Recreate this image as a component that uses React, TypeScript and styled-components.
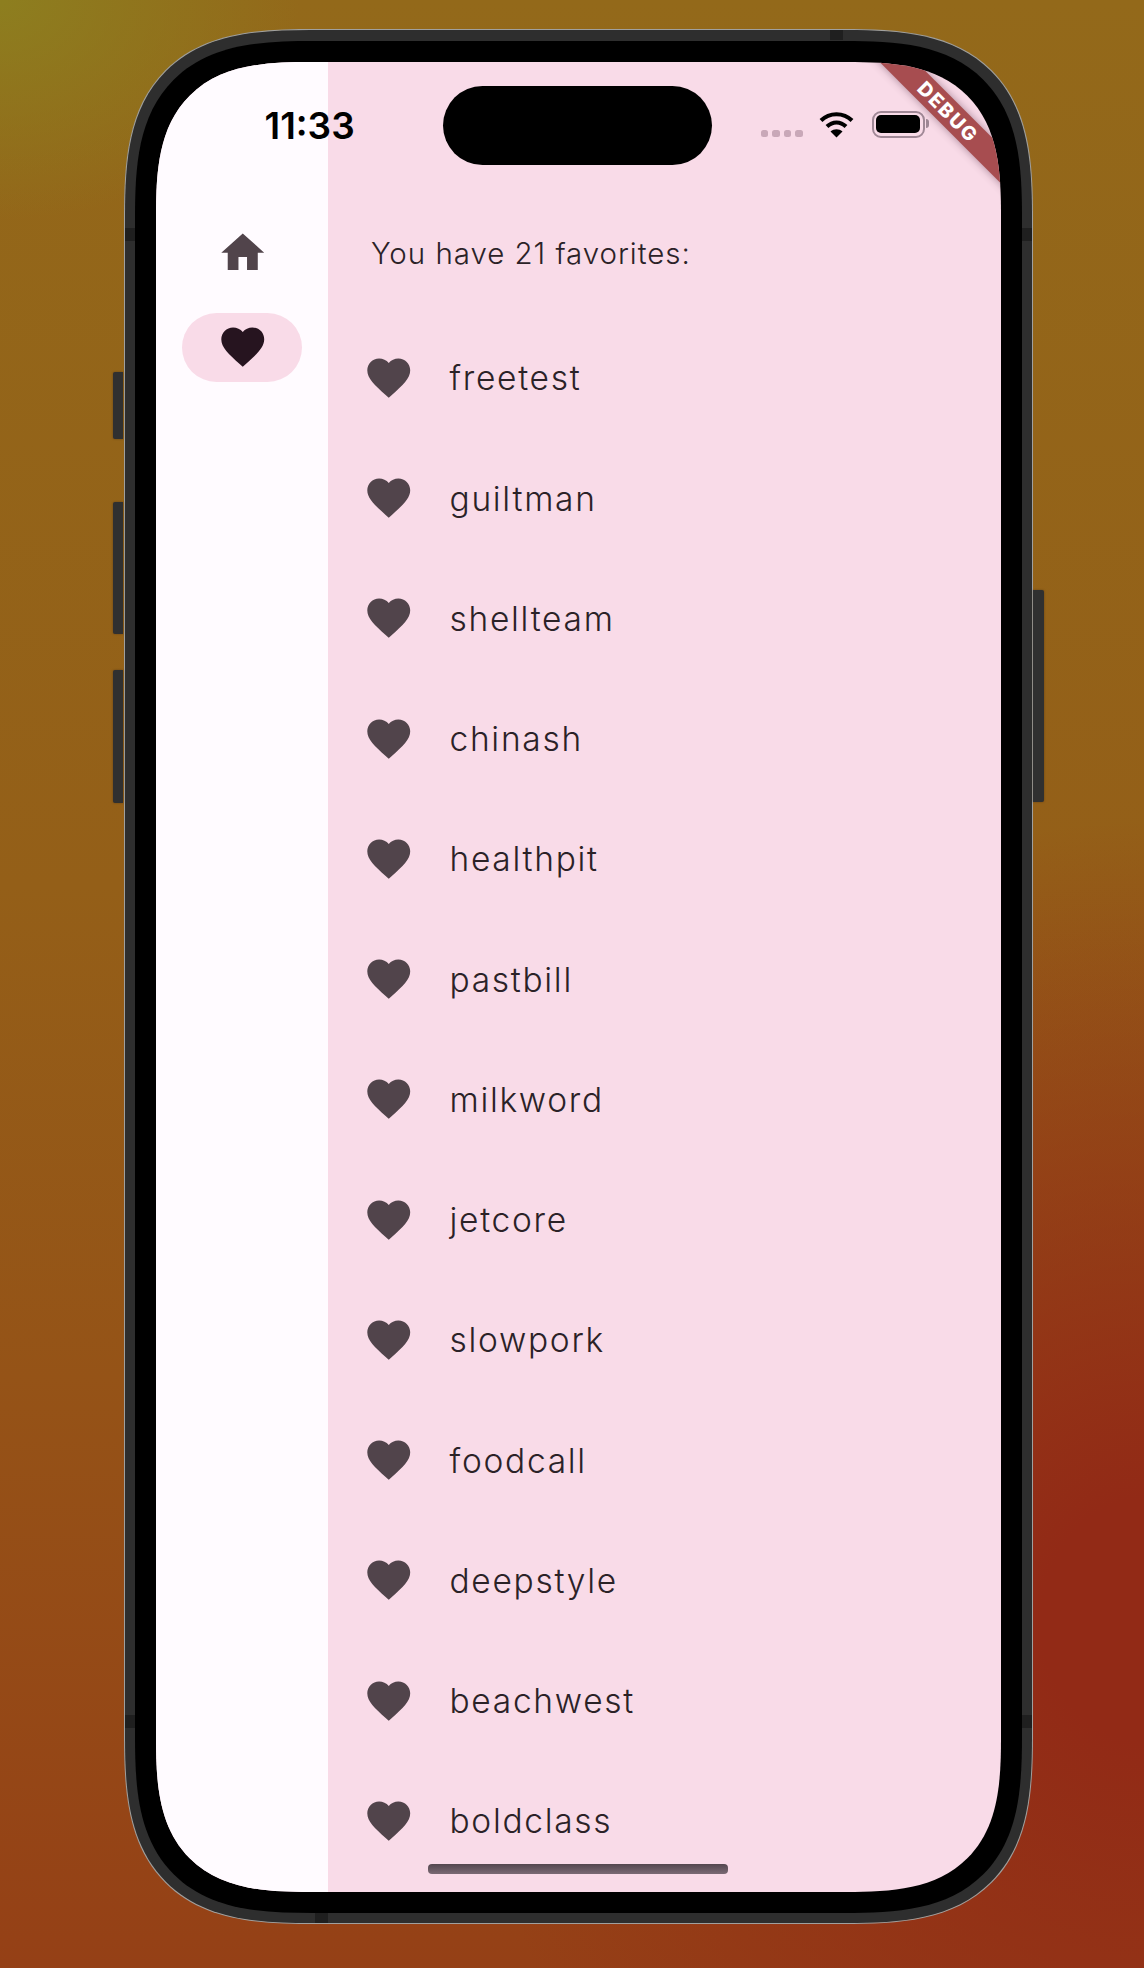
import React from 'react';
import styled, { createGlobalStyle } from 'styled-components';

const GlobalStyle = createGlobalStyle`
    html, body {
        margin: 0;
        padding: 0;
    }
    body {
        font-family: Inter, "Liberation Sans", sans-serif;
    }
`;

const Page = styled.div`
    width: 1144px;
    height: 1968px;
    overflow: hidden;
    box-sizing: border-box;
    padding: 28.5px 0 0 123.5px;
    background:
        radial-gradient(ellipse 300px 220px at 0 0, rgba(140, 130, 32, 0.85), rgba(140, 130, 32, 0) 100%),
        radial-gradient(ellipse 680px 800px at 1144px 1620px, rgba(146, 42, 22, 1) 15%, rgba(146, 42, 22, 0) 100%),
        linear-gradient(180deg, #93691a 0%, #945f18 45%, #955317 70%, #954016 100%);
`;

const Phone = styled.div`
    position: relative;
    width: 909px;
    height: 1895px;
    box-sizing: border-box;
    padding: 11px 10px 10px;
    border-radius: 190px;
    corner-shape: superellipse(1.5);
    background: #2e2e2e;
    border: 1.5px solid #a0a09e;
`;

const SideButton = styled.div<{ $top: number; $height: number; $right?: boolean }>`
    position: absolute;
    top: ${p => p.$top}px;
    height: ${p => p.$height}px;
    width: 10.5px;
    ${p => (p.$right ? 'right: -12px;' : 'left: -12px;')}
    background: #303030;
    border-radius: ${p => (p.$right ? '0 2px 2px 0' : '2px 0 0 2px')};
    box-shadow: 0 0 2px rgba(60, 40, 20, 0.6);
`;

const AntennaBand = styled.div<{ $side: 'top' | 'bottom' | 'left' | 'right'; $at: number }>`
    position: absolute;
    background: #1f1f1f;
    ${p => {
        if (p.$side === 'top' || p.$side === 'bottom') {
            return `left: ${p.$at}px; width: 13px; height: 10px; ${p.$side}: 0;`;
        }
        return `top: ${p.$at}px; height: 13px; width: 10px; ${p.$side}: 0;`;
    }}
`;

const Bezel = styled.div`
    position: relative;
    height: 100%;
    box-sizing: border-box;
    padding: 21px;
    border-radius: 178px;
    corner-shape: superellipse(1.5);
    background: #000;
`;

const Screen = styled.div`
    position: relative;
    display: flex;
    height: 100%;
    overflow: hidden;
    border-radius: 155px;
    corner-shape: superellipse(1.5);
    background: #f9dbe8;
`;

const Rail = styled.nav`
    flex: 0 0 172px;
    box-sizing: border-box;
    padding-top: 144.5px;
    background: #fffbff;
`;

const RailItem = styled.div`
    display: flex;
    align-items: center;
    justify-content: center;
    height: 94px;
`;

const RailPill = styled.div<{ $active?: boolean }>`
    display: flex;
    align-items: center;
    justify-content: center;
    width: 120px;
    height: 69px;
    padding-left: 2px;
    box-sizing: border-box;
    border-radius: 35px;
    background: ${p => (p.$active ? '#f9dbe8' : 'transparent')};
`;

const Content = styled.main`
    flex: 1;
    min-width: 0;
    padding-top: 127px;
`;

const Heading = styled.div`
    padding: 43px 43px 43px 43.5px;
    font-size: 29.5px;
    line-height: 43px;
    font-weight: 350;
    letter-spacing: 0.96px;
    color: #2b2227;
`;

const FavoriteRow = styled.div`
    display: flex;
    align-items: center;
    gap: 35px;
    height: 120.26px;
    padding-left: 35.5px;
`;

const FavoriteName = styled.span`
    padding-top: 1.5px;
    font-size: 33.5px;
    font-weight: 350;
    letter-spacing: 1.7px;
    color: #2b2227;
`;

const StatusBar = styled.div`
    position: absolute;
    inset: 0 0 auto 0;
    height: 110px;
`;

const Clock = styled.span`
    position: absolute;
    left: 109px;
    top: 42px;
    font-size: 37px;
    line-height: 44px;
    font-weight: 600;
    color: #000;
`;

const Island = styled.div`
    position: absolute;
    left: 287px;
    top: 24px;
    width: 269px;
    height: 79px;
    border-radius: 40px;
    background: #000;
`;

const SignalDots = styled.div`
    position: absolute;
    left: 605px;
    top: 68px;
    display: flex;
    gap: 4px;
`;

const SignalDot = styled.span`
    width: 7.5px;
    height: 7.5px;
    border-radius: 2.5px;
    background: #c9a8b8;
`;

const WifiGlyph = styled.svg`
    position: absolute;
    left: 663px;
    top: 49px;
`;

const Battery = styled.div`
    position: absolute;
    left: 716px;
    top: 49px;
    width: 53px;
    height: 27px;
    box-sizing: border-box;
    padding: 2.5px;
    border: 2px solid #a08896;
    border-radius: 9px;
    &::after {
        content: '';
        position: absolute;
        right: -6px;
        top: 6px;
        width: 3px;
        height: 9px;
        border-radius: 0 3px 3px 0;
        background: #a08896;
    }
`;

const BatteryLevel = styled.div`
    height: 100%;
    border-radius: 5px;
    background: #000;
`;

const DebugBanner = styled.div`
    position: absolute;
    left: 642px;
    top: 37px;
    width: 300px;
    height: 26px;
    display: flex;
    align-items: center;
    justify-content: center;
    transform: rotate(45deg);
    background: #a74d50;
    box-shadow: 0 0 8px rgba(70, 30, 50, 0.45);
    color: #fff;
    font-size: 19.5px;
    font-weight: 800;
    letter-spacing: 1.8px;
`;

const HomeIndicator = styled.div`
    position: absolute;
    left: 272px;
    bottom: 18px;
    width: 300px;
    height: 10px;
    border-radius: 4px;
    background: linear-gradient(180deg, #54474f, #7a6a74);
`;

const HOME_PATH = 'M10 20v-6h4v6h5v-8h3L12 3 2 12h3v8z';
const HEART_PATH =
    'M12 21.35l-1.45-1.32C5.4 15.36 2 12.28 2 8.5 2 5.42 4.42 3 7.5 3c1.74 0 3.41.81 4.5 2.09C13.09 3.81 14.76 3 16.5 3 19.58 3 22 5.42 22 8.5c0 3.78-3.4 6.86-8.55 11.54L12 21.35z';

const Glyph: React.FC<{ path: string; color: string }> = ({ path, color }) => (
    <svg width="51.5" height="51.5" viewBox="0 0 24 24" style={{ flex: 'none' }}>
        <path d={path} fill={color} />
    </svg>
);

const favorites = [
    'freetest',
    'guiltman',
    'shellteam',
    'chinash',
    'healthpit',
    'pastbill',
    'milkword',
    'jetcore',
    'slowpork',
    'foodcall',
    'deepstyle',
    'beachwest',
    'boldclass',
];

export default function App() {
    return (
        <Page>
            <GlobalStyle />
            <Phone>
                <SideButton $top={342} $height={67} />
                <SideButton $top={472} $height={132} />
                <SideButton $top={640} $height={133} />
                <SideButton $right $top={560} $height={212} />
                <AntennaBand $side="top" $at={705} />
                <AntennaBand $side="left" $at={198} />
                <AntennaBand $side="right" $at={198} />
                <AntennaBand $side="left" $at={1685} />
                <AntennaBand $side="right" $at={1685} />
                <AntennaBand $side="bottom" $at={190} />
                <Bezel>
                    <Screen>
                        <Rail>
                            <RailItem>
                                <RailPill>
                                    <Glyph path={HOME_PATH} color="#51444b" />
                                </RailPill>
                            </RailItem>
                            <RailItem>
                                <RailPill $active>
                                    <Glyph path={HEART_PATH} color="#26141f" />
                                </RailPill>
                            </RailItem>
                        </Rail>
                        <Content>
                            <Heading>You have 21 favorites:</Heading>
                            {favorites.map(name => (
                                <FavoriteRow key={name}>
                                    <Glyph path={HEART_PATH} color="#51444b" />
                                    <FavoriteName>{name}</FavoriteName>
                                </FavoriteRow>
                            ))}
                        </Content>
                        <StatusBar>
                            <Clock>11:33</Clock>
                            <Island />
                            <SignalDots>
                                <SignalDot />
                                <SignalDot />
                                <SignalDot />
                                <SignalDot />
                            </SignalDots>
                            <WifiGlyph width="35" height="27" viewBox="0 0 35 27">
                                <path d="M2 9.5C10.5 1 24.5 1 33 9.5" fill="none" stroke="#000" strokeWidth="4" />
                                <path d="M8 15.5C13.5 10 21.5 10 27 15.5" fill="none" stroke="#000" strokeWidth="4" />
                                <path d="M11.5 20.5C15 17.5 20 17.5 23.5 20.5L17.5 26.5Z" fill="#000" />
                            </WifiGlyph>
                            <Battery>
                                <BatteryLevel />
                            </Battery>
                        </StatusBar>
                        <DebugBanner>DEBUG</DebugBanner>
                        <HomeIndicator />
                    </Screen>
                </Bezel>
            </Phone>
        </Page>
    );
}
